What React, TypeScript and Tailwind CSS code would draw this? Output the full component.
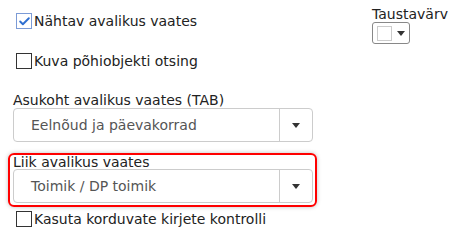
import { Check } from 'lucide-react';

const font = { fontFamily: '"DejaVu Sans", Verdana, sans-serif' };

function Box({ checked }: { checked?: boolean }) {
  return (
    <span
      className={`w-[16px] h-[16px] shrink-0 flex items-center justify-center border ${
        checked ? 'border-[#7c9bd6] bg-white' : 'border-[#333] bg-white'
      }`}
    >
      {checked && <Check size={13} strokeWidth={3.5} className="text-[#2f6fd0]" />}
    </span>
  );
}

function Arrow() {
  return <span className="w-0 h-0 border-l-[4px] border-r-[4px] border-t-[5px] border-l-transparent border-r-transparent border-t-[#333]" />;
}

function Select({ value }: { value: string }) {
  return (
    <div className="flex h-[34px] w-[300px] border border-[#ccc] rounded-[4px] bg-white">
      <div className="flex-1 flex items-center pl-[17px] text-[14px] text-[#555]">{value}</div>
      <div className="w-[33px] border-l border-[#ccc] flex items-center justify-center">
        <Arrow />
      </div>
    </div>
  );
}

export default function App() {
  return (
    <div className="w-[456px] h-[240px] bg-white flex text-[14px] text-[#222] overflow-hidden" style={font}>
      <div className="flex flex-col pl-[8px] w-[320px]">
        <label className="flex items-center gap-[2px] pl-[8px] mt-[13px] h-[16px]">
          <Box checked />
          <span>Nähtav avalikus vaates</span>
        </label>
        <label className="flex items-center gap-[2px] pl-[8px] mt-[24px] h-[16px]">
          <Box />
          <span>Kuva põhiobjekti otsing</span>
        </label>
        <div className="pl-[5px] mt-[23px] leading-[16px]">Asukoht avalikus vaates (TAB)</div>
        <div className="pl-[5px]">
          <Select value="Eelnõud ja päevakorrad" />
        </div>
        <div className="mt-[11px] w-[309px] border-2 border-[#f00] rounded-[6px] pl-[3px] pb-[2px] shadow-[0_0_4px_rgba(0,0,0,0.25)]">
          <div className="leading-[14px]">Liik avalikus vaates</div>
          <Select value="Toimik / DP toimik" />
        </div>
        <label className="flex items-center gap-[2px] pl-[8px] mt-[4px] h-[16px]">
          <Box />
          <span>Kasuta korduvate kirjete kontrolli</span>
        </label>
      </div>
      <div className="flex flex-col ml-[52px] mt-[7px]">
        <div className="leading-[15px]">Taustavärv</div>
        <div className="mt-[0px] w-[38px] h-[22px] border border-[#888] rounded-[3px] flex items-center pl-[4px] gap-[5px]">
          <span className="w-[15px] h-[15px] border border-[#ccc] bg-white" />
          <Arrow />
        </div>
      </div>
    </div>
  );
}
